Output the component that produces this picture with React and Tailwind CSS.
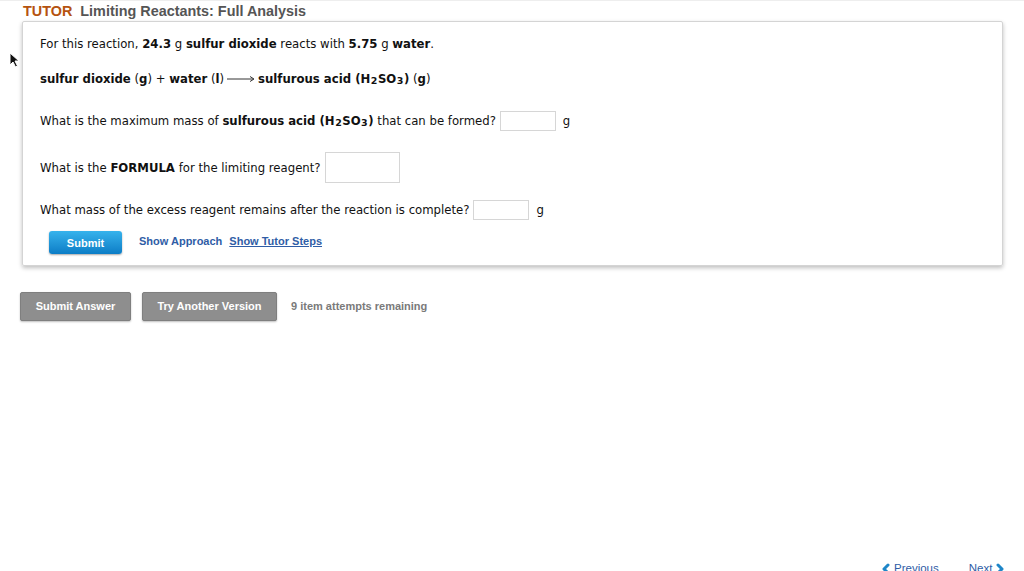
import { ChevronLeft, ChevronRight } from "lucide-react";

const BODY = { fontFamily: "'DejaVu Sans', Verdana, sans-serif" };
const ARIAL = { fontFamily: "'Liberation Sans', Arial, sans-serif" };

function Sub({ children }) {
  return <sub className="text-[9.5px] relative top-[1px] px-[0.5px]">{children}</sub>;
}

function Field({ w, h }) {
  return <span className={`inline-block ${w} ${h} border border-[#d6d6d6] bg-white align-middle`} />;
}

function LongArrow() {
  return (
    <svg className="inline-block align-middle mx-[3px] -mt-[2px]" width="28" height="8" viewBox="0 0 28 8">
      <path d="M0 4 H26" stroke="#333" strokeWidth="1" />
      <path d="M23 1.5 L27 4 L23 6.5" fill="none" stroke="#333" strokeWidth="1" />
    </svg>
  );
}

export default function App() {
  return (
    <div className="w-[1024px] h-[571px] bg-white relative overflow-hidden border-t border-[#eeeeee]">
      {/* Header */}
      <div className="pl-[23px] pt-[1px] h-[20px] flex items-center gap-[8px] text-[14.4px] font-bold" style={ARIAL}>
        <span className="text-[#b5530f]">TUTOR</span>
        <span className="text-[#555555]">Limiting Reactants: Full Analysis</span>
      </div>

      {/* Cursor */}
      <svg className="absolute left-[9px] top-[51px]" width="11" height="16" viewBox="0 0 11 16">
        <path d="M1 1 L1 13 L4 10 L6.5 15 L8.5 14 L6 9 L10 9 Z" fill="#111" stroke="#fff" strokeWidth="1" />
      </svg>

      {/* Question panel */}
      <div
        className="ml-[22px] w-[981px] border border-[#d4d4d4] rounded-[2px] shadow-[0_2px_4px_rgba(0,0,0,0.25)] pl-[17px] pt-[14px] pb-[11px] text-[11.7px] text-[#111] leading-[16px]"
        style={BODY}
      >
        <div>
          For this reaction, <b>24.3</b> g <b>sulfur dioxide</b> reacts with <b>5.75</b> g <b>water</b>.
        </div>

        <div className="mt-[19px]">
          <b>sulfur dioxide</b> (<b>g</b>) + <b>water</b> (<b>l</b>)
          <LongArrow />
          <b>
            sulfurous acid (H<Sub>2</Sub>SO<Sub>3</Sub>)
          </b>{" "}
          (<b>g</b>)
        </div>

        <div className="mt-[24px] h-[20px] flex items-center">
          <span>
            What is the maximum mass of{" "}
            <b>
              sulfurous acid (H<Sub>2</Sub>SO<Sub>3</Sub>)
            </b>{" "}
            that can be formed?
          </span>
          <span className="ml-[4px]"><Field w="w-[56px]" h="h-[20px]" /></span>
          <span className="ml-[7px]">g</span>
        </div>

        <div className="mt-[21px] h-[31px] flex items-center">
          <span>
            What is the <b>FORMULA</b> for the limiting reagent?
          </span>
          <span className="ml-[4px]"><Field w="w-[75px]" h="h-[31px]" /></span>
        </div>

        <div className="mt-[17px] h-[20px] flex items-center">
          <span>What mass of the excess reagent remains after the reaction is complete?</span>
          <span className="ml-[4px]"><Field w="w-[56px]" h="h-[20px]" /></span>
          <span className="ml-[7px]">g</span>
        </div>

        <div className="mt-[11px] h-[23px] flex items-center text-[11px] font-bold leading-[14px]" style={ARIAL}>
          <button className="ml-[9px] w-[73px] h-[23px] rounded-[3px] bg-gradient-to-b from-[#36b3ec] to-[#0b7dc6] text-white shadow-[0_1px_2px_rgba(0,0,0,0.35)]">
            Submit
          </button>
          <span className="ml-[17px] -mt-[3px] text-[#2f5da6]">Show Approach</span>
          <span className="ml-[7px] -mt-[3px] text-[#2f5da6] underline">Show Tutor Steps</span>
        </div>
      </div>

      {/* Bottom actions */}
      <div className="mt-[26px] ml-[20px] flex items-center text-[11px] font-bold" style={ARIAL}>
        <button className="w-[111px] h-[29px] rounded-[2px] bg-[#8e8e8e] text-white border border-[#7f7f7f] shadow-[0_1px_2px_rgba(0,0,0,0.25)]">
          Submit Answer
        </button>
        <button className="ml-[11px] w-[135px] h-[29px] rounded-[2px] bg-[#8e8e8e] text-white border border-[#7f7f7f] shadow-[0_1px_2px_rgba(0,0,0,0.25)]">
          Try Another Version
        </button>
        <span className="ml-[14px] text-[#7a7a7a]">9 item attempts remaining</span>
      </div>

      {/* Pager */}
      <div className="absolute top-[559px] left-[878px] flex items-center text-[11.5px] text-[#2f5da6]" style={ARIAL}>
        <ChevronLeft className="w-[16px] h-[16px] text-[#1e86c8]" strokeWidth={4.5} />
        <span>Previous</span>
        <span className="ml-[30px]">Next</span>
        <ChevronRight className="w-[16px] h-[16px] text-[#1e86c8]" strokeWidth={4.5} />
      </div>
    </div>
  );
}
